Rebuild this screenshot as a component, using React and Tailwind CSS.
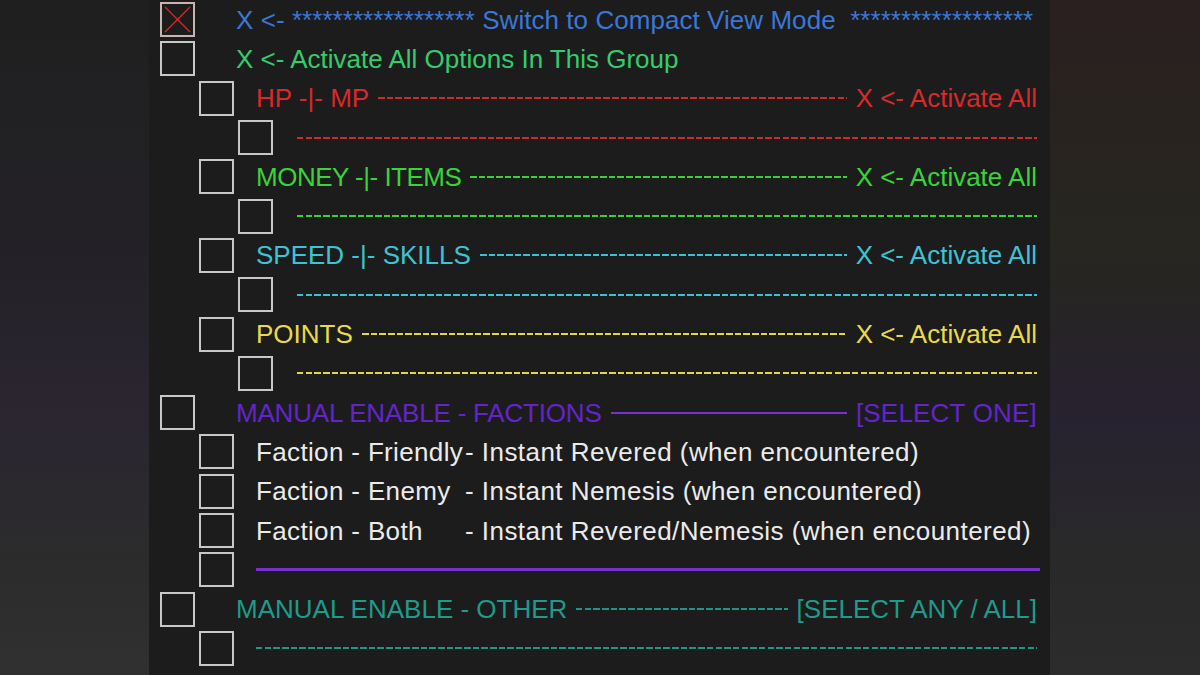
import React from 'react';

// one check square, optionally crossed
const Box = ({ checked }) => (
  <div
    className={`relative w-[35px] h-[35px] shrink-0 border-2 ${
      checked ? 'border-[#c9b4b4]' : 'border-[#c8c8c8]'
    }`}
  >
    {checked && (
      <svg className="absolute inset-0 w-full h-full" viewBox="0 0 31 31">
        <line x1="3" y1="3" x2="28" y2="28" stroke="#d42a2a" strokeWidth="1.3" />
        <line x1="28" y1="3" x2="3" y2="28" stroke="#d42a2a" strokeWidth="1.3" />
      </svg>
    )}
  </div>
);

const levelPad = ['pl-[11px]', 'pl-[50px]', 'pl-[89px]'];
const levelGap = ['ml-[41px]', 'ml-[22px]', 'ml-[24px]'];

const Row = ({ level = 0, checked, children }) => (
  <div className={`flex items-center h-[39.3px] ${levelPad[level]}`}>
    <Box checked={checked} />
    <div className={`flex items-center flex-1 min-w-0 ${levelGap[level]}`}>{children}</div>
  </div>
);

const dash = {
  red: 'bg-[repeating-linear-gradient(90deg,#d02a2a_0_6.5px,transparent_6.5px_8.67px)]',
  green: 'bg-[repeating-linear-gradient(90deg,#36d236_0_6.5px,transparent_6.5px_8.67px)]',
  cyan: 'bg-[repeating-linear-gradient(90deg,#3ac2d4_0_6.5px,transparent_6.5px_8.67px)]',
  yellow: 'bg-[repeating-linear-gradient(90deg,#e4d648_0_6.5px,transparent_6.5px_8.67px)]',
  teal: 'bg-[repeating-linear-gradient(90deg,#1f958a_0_6.5px,transparent_6.5px_8.67px)]',
};

const Line = ({ cls, inline }) => (
  <div className={`h-[2px] flex-1 ${cls} ${inline ? 'mx-[9px]' : ''}`} />
);

const Group = ({ label, color, line, track = '' }) => (
  <>
    <Row level={1}>
      <span className={`whitespace-pre ${color} ${track}`}>{label}</span>
      <Line cls={line} inline />
      <span className={`whitespace-pre ${color}`}>X &lt;- Activate All</span>
    </Row>
    <Row level={2}>
      <Line cls={line} />
    </Row>
  </>
);

const Faction = ({ who, what }) => (
  <Row level={1}>
    <span className="w-[209px] shrink-0 whitespace-pre text-[#ebebeb] tracking-[0.35px]">
      Faction - {who}
    </span>
    <span className="whitespace-pre text-[#ebebeb] tracking-[0.45px]">- {what} (when encountered)</span>
  </Row>
);

export default function App() {
  return (
    <div className="w-[1200px] h-[675px] overflow-hidden flex bg-[#242424] font-['Liberation_Sans',Arial,sans-serif] text-[26px] leading-none">
      <div className="w-[149px] shrink-0 bg-[linear-gradient(180deg,#1f1f1f_0%,#232126_35%,#2a2530_60%,#2c2c2c_85%,#303030_100%)]" />

      <div className="w-[901px] shrink-0 bg-[#1c1c1c] pr-[13px]">
        <Row level={0} checked>
          <span className="whitespace-pre text-[#3a77d6] tracking-[0.05px]">
            X &lt;- ****************** Switch to Compact View Mode  ******************
          </span>
        </Row>
        <Row level={0}>
          <span className="whitespace-pre text-[#34cc6c]">X &lt;- Activate All Options In This Group</span>
        </Row>

        <Group label="HP -|- MP" color="text-[#d8292b]" line={dash.red} />
        <Group label="MONEY -|- ITEMS" color="text-[#38d43a]" line={dash.green} track="tracking-[-0.5px]" />
        <Group label="SPEED -|- SKILLS" color="text-[#3cc4d6]" line={dash.cyan} />
        <Group label="POINTS" color="text-[#e8da4a]" line={dash.yellow} />

        <Row level={0}>
          <span className="whitespace-pre text-[#6424cc] tracking-[-0.2px]">MANUAL ENABLE - FACTIONS</span>
          <div className="h-[2px] flex-1 mx-[9px] bg-[#7a2fcf]" />
          <span className="whitespace-pre text-[#6424cc] tracking-[0.2px]">[SELECT ONE]</span>
        </Row>
        <Faction who="Friendly" what="Instant Revered" />
        <Faction who="Enemy" what="Instant Nemesis" />
        <Faction who="Both" what="Instant Revered/Nemesis" />
        <Row level={1}>
          <div className="h-[3px] flex-1 bg-[#7a2fcf] -mr-[3px]" />
        </Row>

        <Row level={0}>
          <span className="whitespace-pre text-[#1f9a8c] tracking-[0px]">MANUAL ENABLE - OTHER</span>
          <Line cls={dash.teal} inline />
          <span className="whitespace-pre text-[#1f9a8c]">[SELECT ANY / ALL]</span>
        </Row>
        <Row level={1}>
          <Line cls={dash.teal} />
        </Row>
      </div>

      <div className="flex-1 bg-[linear-gradient(180deg,#2a201f_0%,#27261f_35%,#272230_62%,#292929_82%,#2c2c2c_100%)]" />
    </div>
  );
}
